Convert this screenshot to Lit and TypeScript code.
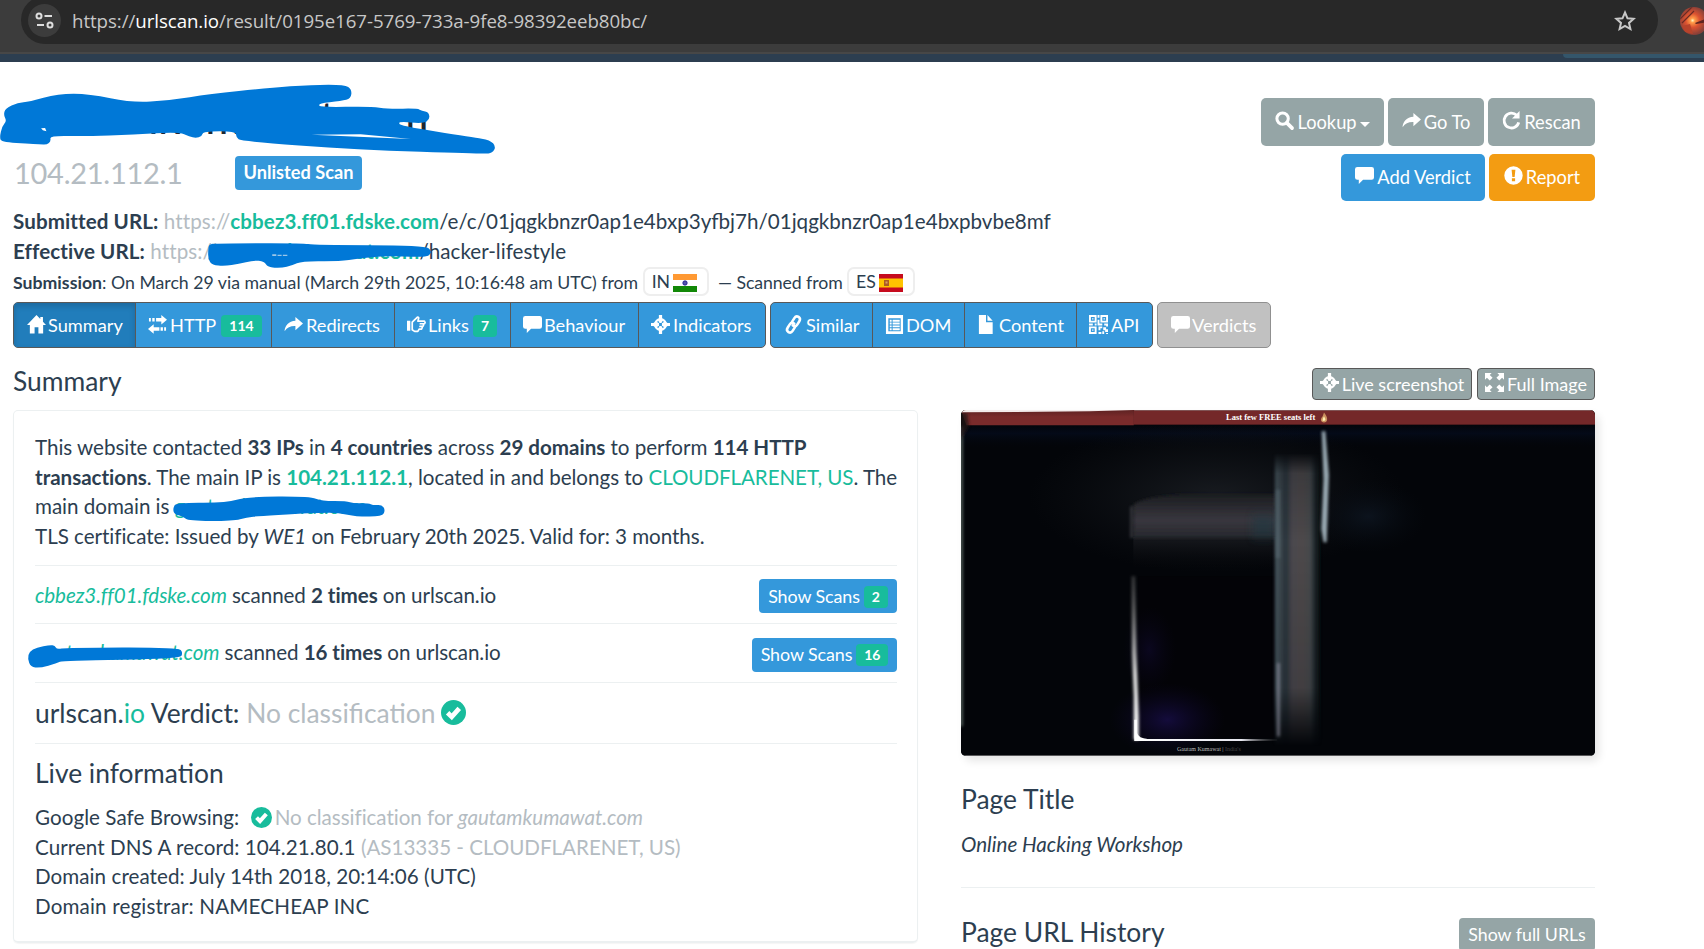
import { LitElement, html, svg, css } from "lit";
import { customElement } from "lit/decorators.js";

type Pt = [number, number];

/* Closed marker outline, smoothed through the midpoints of its vertices. */
const blob = (pts: Pt[]): string => {
  const mid = (a: Pt, b: Pt) => `${(a[0] + b[0]) / 2} ${(a[1] + b[1]) / 2}`;
  const n = pts.length;
  let d = `M${mid(pts[n - 1], pts[0])}`;
  pts.forEach((p, i) => (d += `Q${p[0]} ${p[1]} ${mid(p, pts[(i + 1) % n])}`));
  return d + "Z";
};

const TITLE: Pt[] = [[8,345],[12,325],[40,308],[65,305],[130,281],[200,281],[295,308],[380,301],[470,282],[600,264],[700,254],[772,254],[788,268],[786,296],[765,303],[712,311],[718,322],[830,319],[870,327],[935,325],[945,333],[960,336],[963,358],[948,371],[893,364],[893,377],[1060,412],[1098,420],[1111,440],[1103,459],[1085,462],[800,449],[540,424],[529,412],[528,394],[455,394],[452,410],[438,414],[425,410],[400,396],[300,404],[190,409],[112,407],[114,424],[105,434],[90,433],[4,427],[-1,412],[5,378],[15,363]];
const EFFECTIVE: Pt[] = [[510,150],[512,133],[530,130],[740,129],[770,135],[1040,136],[1058,152],[1052,168],[1030,171],[940,168],[880,176],[830,184],[740,183],[715,197],[690,204],[655,202],[648,184],[620,181],[585,192],[550,198],[520,195],[510,178]];
const DOMAIN: Pt[] = [[519,325],[528,308],[680,309],[740,290],[930,289],[965,303],[1040,303],[1060,310],[1105,309],[1120,316],[1145,314],[1156,330],[1147,349],[1070,350],[1015,338],[960,338],[890,342],[780,348],[740,352],[700,363],[565,363],[550,350],[522,342]];
const SCANNED: Pt[] = [[83,775],[88,755],[110,742],[150,735],[165,737],[170,748],[200,743],[535,742],[549,758],[540,777],[190,781],[170,790],[120,804],[92,801]];

const ICONS: Record<string, unknown> = {
  search: svg`<circle cx="8" cy="8" r="6" fill="none" stroke="currentColor" stroke-width="3.200"/><path d="M12.500 12.500l5.500 5.500" stroke="currentColor" stroke-width="3.800" stroke-linecap="round"/>`,
  share: svg`<path d="M12 2l8 7-8 7v-4.300C7 11.500 3.500 13 0.600 17 1 11 5 6.200 12 6z"/>`,
  repeat: svg`<path d="M15.500 4.500A7.800 7.800 0 1 0 17.600 12" fill="none" stroke="currentColor" stroke-width="3"/><path d="M18.500 0v8h-8z"/>`,
  comment: svg`<path d="M2.500 1h15q2.500 0 2.500 2.500v8.500q0 2.500-2.500 2.500H8.500L4 19v-4.500H2.500Q0 14.500 0 12V3.500Q0 1 2.500 1z"/>`,
  alert: svg`<path fill-rule="evenodd" d="M10 .3a9.700 9.700 0 1 0 0 19.400A9.700 9.700 0 1 0 10 .3zM8 4h4l-.8 7.500H8.800zM8.300 13h3.400v3H8.300z"/>`,
  home: svg`<path d="M10 0L0 10.500h3V19.500h5V13h4v6.500h5v-9h3L16.800 7.100V2H14v2.200z"/>`,
  transfer: svg`<path d="M14 0l6 5-6 5V6.800H8.500V3.200H14zM1 3.200h2v3.600H1zM4.500 3.200h2.500v3.600H4.500zM6 9.700l-6 5 6 5v-3.200h6v-3.600H6zM13.200 12.900h2.500v3.600h-2.500zM17 12.900h2v3.600h-2z"/>`,
  hand: svg`<path d="M0 6h3.500v10.500H0z"/><path d="M5.500 7.500L11 2.200q2 0 1 2.300L11.500 6.500h7q1.200 1.500 0 2.700h-4.500 3q1 1.500-.3 2.800h-3 2q.8 1.500-.3 2.800h-2.500l-1.500 2.400H8L5.500 15.500z" fill="none" stroke="currentColor" stroke-width="1.800" stroke-linejoin="round"/>`,
  target: svg`<circle cx="10" cy="10" r="5.700" fill="none" stroke="currentColor" stroke-width="2.300"/><path d="M8.300 0h3.400v4l1 1.500-1.700 3h-2l-1.700-3 1-1.500zM8.300 20h3.400v-4l1-1.500-1.700-3h-2l-1.700 3 1 1.500zM0 8.300v3.400h2.500l3 1.500 3-2v-2.400l-3-2-3 1.500zM20 8.300v3.400h-2.500l-3 1.500-3-2v-2.400l3-2 3 1.500z"/>`,
  link: svg`<g fill="none" stroke="currentColor" stroke-width="2.700" stroke-linecap="round" transform="rotate(32 10 10)"><path d="M7.200 8.500V3.800Q7.200.4 10.300.4T13.400 3.800V8q0 3.200-3.600 3.200"/><path d="M12.800 11.500v4.700q0 3.400-3.100 3.400T6.600 16.200V12q0-3.200 3.600-3.200"/></g>`,
  list: svg`<path fill-rule="evenodd" d="M1 0h18v20H1zM3.500 3.500v13.500h13V3.500z"/><path d="M5 5h2v2H5zM8 5h7.500v2H8zM5 8h2v2H5zM8 8h7.500v2H8zM5 11h2v2H5zM8 11h7.500v2H8zM5 14h2v2H5zM8 14h7.500v2H8z"/>`,
  file: svg`<path d="M2 0h7.500v7.500h7V20H2zM11 0l5.500 6H11z"/>`,
  qr: svg`<path fill-rule="evenodd" d="M0 0h8v8H0zM2 2v4h4V2zM12 0h8v8h-8zM14 2v4h4V2zM0 12h8v8H0zM2 14v4h4v-4zM3.300 3.300h1.400v1.400H3.300zM15.300 3.300h1.400v1.400h-1.400zM3.300 15.300h1.400v1.400H3.300zM9 0h2v3H9zM9 5h2v4h3v2H9zM0 9h4v2H0zM6 9h2v2H6zM16 9h4v3h-2v-1h-2zM10 12h4v2h-2v2h-2zM15 13h3v2h2v3h-3v-2h-2zM10 18h3v2h-3zM14 17h2v3h-2zM18 19h2v1h-2z"/>`,
  full: svg`<path d="M0 0h7L5 2l3 3-3 3-3-3-2 2zM20 0v7l-2-2-3 3-3-3 3-3-2-2zM0 20v-7l2 2 3-3 3 3-3 3 2 2zM20 20h-7l2-2-3-3 3-3 3 3 2-2z"/>`,
  ok: svg`<circle cx="10" cy="10" r="10"/><path d="M5.300 10.200l3.300 3.300 6-6.800" fill="none" stroke="#fff" stroke-width="3.800"/>`,
};
const icon = (name: string, cls = "") =>
  html`<svg class="ic ${cls}" viewBox="0 0 20 20" fill="currentColor" overflow="visible">${ICONS[name]}</svg>`;

interface Tab { icon: string; label: string; w: number; gap: number; count?: number; active?: boolean }
const GROUPS: Tab[][] = [
  [
    { icon: "home", label: "Summary", w: 121, active: true, gap: 2 },
    { icon: "transfer", label: "HTTP", w: 136, count: 114, gap: 3 },
    { icon: "share", label: "Redirects", w: 123, gap: 3 },
    { icon: "hand", label: "Links", w: 116, count: 7, gap: 2 },
    { icon: "comment", label: "Behaviour", w: 128, gap: 2 },
    { icon: "target", label: "Indicators", w: 127, gap: 3 },
  ],
  [
    { icon: "link", label: "Similar", w: 101, gap: 3 },
    { icon: "list", label: "DOM", w: 92, gap: 2 },
    { icon: "file", label: "Content", w: 112, gap: 3 },
    { icon: "qr", label: "API", w: 76, gap: 3 },
  ],
];

@customElement("app-root")
export class AppRoot extends LitElement {
  static styles = css`
    :host { display: block; position: relative; width: 1704px; height: 949px; overflow: hidden; background: #fff;
      font-family: Lato, sans-serif; font-size: 20.6px; line-height: 29.7px; color: #2c3e50; }
    * { box-sizing: border-box; }
    b { font-weight: 700; }
    .green { color: #18bc9c; }
    .mute { color: #b4bcc2; }
    .chrome { height: 52px; background: #3c3c3c; display: flex; padding-left: 21px; overflow: hidden; }
    .omni { flex: none; margin-top: -4px; width: 1637px; height: 48px; border-radius: 24px; background: #282828; display: flex; align-items: center; padding: 1px 22px 0 7px; }
    .tune { width: 33px; height: 33px; border-radius: 50%; background: #3c3c3c; display: grid; place-items: center; }
    .addr { flex: 1; margin-left: 11px; font: 18.700px/24px "Open Sans", sans-serif; letter-spacing: -.06px; color: #c7c7c7; white-space: pre; }
    .addr span { color: #fff; }
    .avatar { margin: 7px 0 0 22px; flex: none; }
    .edge { height: 2px; background: #474747; }
    .nav { height: 8px; background: #2c3e50; display: flex; justify-content: flex-end; }
    .nav i { width: 141px; height: 4px; background: #34566b; border-bottom-left-radius: 4px; }
    .page { padding-left: 13px; width: 1595px; }
    .head { display: flex; height: 240px; justify-content: space-between; }
    .title { margin: 0; height: 94px; padding: 35px 0 0 1px; font-size: 44.300px; line-height: 40px; font-weight: 400; color: #1d2731; }
    .iprow { display: flex; align-items: center; height: 34px; margin-bottom: 16px; }
    .ip { width: 222px; font-size: 29px; letter-spacing: -.27px; padding-left: 1px; color: #b4bcc2; }
    .badge { background: #3498db; color: #fff; font-weight: 700; font-size: 18.200px; border-radius: 4px; width: 127px; height: 34px; line-height: 33px; text-align: center; }
    .url { height: 30px; line-height: 30px; white-space: pre; }
    .url b { letter-spacing: .08px; } .url .mute { letter-spacing: .1px; } .url .wide { letter-spacing: .36px; }
    .sub { display: flex; align-items: center; height: 31px; padding-top: 2px; font-size: 17.700px; white-space: pre; }
    .sub .from { letter-spacing: -.08px; }
    .flag { display: inline-flex; align-items: center; height: 29px; margin-top: -2px; border: 2px solid #eee; border-radius: 7px; padding: 0 10px 0 7px; gap: 3px; }
    .flag svg { margin-top: 2px; }
    .tools { padding-top: 36px; display: flex; flex-direction: column; gap: 8px; align-items: flex-end; }
    .row { display: flex; gap: 4px; }
    .btn { display: flex; align-items: center; justify-content: center; color: #fff; background: #95a5a6; height: 48px; border-radius: 5px; padding-top: 2px; font-size: 18.300px; white-space: pre; }
    .btn .ic { margin: -5px 3px 0 0; }
    .blue { background: #3498db; } .orange { background: #f39c12; }
    .second .btn { height: 47px; padding-top: 1px; }
    .b-look { width: 123px; } .b-go { width: 96px; } .b-re { width: 107px; } .b-add { width: 144px; } .b-rep { width: 106px; }
    .caret { border: 5px solid transparent; border-top-color: #fff; border-bottom: 0; margin: 3px 0 0 3px; }
    .ic { width: 19px; height: 19px; flex: none; }
    .tabs { display: flex; height: 46px; gap: 4px; }
    .group { display: flex; border: 1px solid #585858; border-radius: 5px; overflow: hidden; background: #3498db; }
    .tab { display: flex; align-items: center; color: #fff; font-size: 18.200px; white-space: pre; padding: 2px 0 0 12px; border-left: 1px solid #585858; }
    .tab:first-child { border-left: 0; padding-left: 13px; }
    .tab .ic { margin-top: -4px; }
    .tab.on { background: #217dbb; box-shadow: inset 0 3px 6px rgba(0,0,0,.16); }
    .off { background: #c1c1c1; border-color: #909090; width: 114px; }
    .off .tab { gap: 2px; }
    .count { background: #18bc9c; font-weight: 700; font-size: 14px; line-height: 22px; height: 22px; border-radius: 4px; padding: 0 8px; margin-left: 4px; }
    .tab .count { margin-left: 2px; margin-top: -1px; }
    .cols { display: flex; justify-content: space-between; }
    .left { width: 905px; } .right { width: 634px; }
    h2 { margin: 0; font-weight: 400; font-size: 26.400px; line-height: 36px; }
    .h-sum { height: 62px; padding-top: 15px; }
    .panel { height: 533px; border: 1px solid #ecf0f1; border-bottom-width: 2px; border-radius: 5px; padding: 22px 20px 0 21px; box-shadow: 0 1px 1px rgba(0,0,0,.04); }
    .para { height: 133px; border-bottom: 1px solid #ecf0f1; white-space: nowrap; letter-spacing: -.03px; }
    .para .net { letter-spacing: -.09px; }
    .scan { display: flex; align-items: center; justify-content: space-between; border-bottom: 1px solid #ecf0f1; height: 58px; letter-spacing: -.075px; padding-top: 3px; }
    .scan.two { height: 59px; }
    .scan > div:first-child { margin-top: -1px; }
    .scan.two > div:first-child { margin-top: -3px; }
    .show { height: 34px; width: 138px; font-size: 17.900px; border-radius: 4px; padding-top: 1px; letter-spacing: -.1px; }
    .show.w { width: 145px; }
    .verdict { height: 61px; border-bottom: 1px solid #ecf0f1; display: flex; align-items: center; font-size: 26.400px; white-space: pre; padding-top: 1px; }
    .big { width: 25px; height: 25px; margin: -3px 0 0 6px; color: #18bc9c; }
    .live { padding: 11px 0 11px; height: 59px; }
    .rec { letter-spacing: .06px; } .rec .mute { letter-spacing: -.03px; } .rec.caps { letter-spacing: .16px; }
    .small { width: 21px; height: 21px; color: #18bc9c; vertical-align: -3px; margin: 0 3px 0 6px; }
    .shotbar { height: 62px; padding-top: 20px; display: flex; justify-content: flex-end; gap: 5px; }
    .sm { height: 32px; border: 1px solid #585858; border-radius: 4px; font-size: 18px; width: 160px; padding-top: 1px; }
    .sm.f { width: 118px; } .sm .ic { margin: -4px 3px 0 0; }
    .shot { position: relative; height: 346px; border-radius: 5px; overflow: hidden; background: #030509; }
    .shotwrap { border-radius: 6px; box-shadow: 4px 5px 8px rgba(0,0,0,.1); }
    .shot > svg { display: block; width: 634px; height: 346px; }
    .promo { position: absolute; top: 2px; left: 265px; font: bold 8.500px/11px "Liberation Serif", serif; color: #fff; display: flex; gap: 5px; }
    .foot { position: absolute; top: 335px; left: 216px; font: 6px/8px "Liberation Serif", serif; color: #bbb; }
    .foot span { color: #444; }
    .pt { padding-top: 25px; height: 73px; }
    .ptv { height: 59px; padding-top: 1px; border-bottom: 1px solid #ecf0f1; font-style: italic; }
    .hist { display: flex; justify-content: space-between; padding-top: 26px; }
    .hist .btn { width: 136px; height: 33px; margin-top: 4px; padding-top: 1px; font-size: 17.800px; border-radius: 4px; }
    .mark { position: absolute; left: 0; top: 0; pointer-events: none; }
  `;

  render() {
    return html`
      <div class="chrome">
        <div class="omni">
          <div class="tune"><svg width="19" height="18" viewBox="0 0 19 18" fill="none" stroke="#dedede" stroke-width="2"><circle cx="4" cy="4" r="2.500"/><path d="M9.500 4H17M2 13h7"/><circle cx="15" cy="13" r="2.500"/></svg></div>
          <div class="addr">https://<span>urlscan.io</span>/result/0195e167-5769-733a-9fe8-98392eeb80bc/</div>
          <svg width="22" height="22" viewBox="0 0 22 22" fill="none" stroke="#c7c7c7" stroke-width="2"><path d="M11 2.500l2.500 5.800 6.200.5-4.700 4.100 1.400 6.100L11 15.800 5.600 19 7 12.900 2.300 8.800l6.200-.5z"/></svg>
        </div>
        <svg class="avatar" width="28" height="28" viewBox="0 0 28 28"><defs><clipPath id="av"><circle cx="14" cy="14" r="14"/></clipPath><radialGradient id="ag" cx=".45" cy=".48"><stop offset="0" stop-color="#fff6c0"/><stop offset=".16" stop-color="#ff9c48"/><stop offset=".5" stop-color="#dc5230"/><stop offset="1" stop-color="#8a4038"/></radialGradient></defs>
          <g clip-path="url(#av)"><rect width="28" height="28" fill="url(#ag)"/><path d="M0 12L12 0M2 16L14 4" stroke="#6a2a24" stroke-width="1.200"/><path d="M15 16l13-5v4l-12 2z" fill="#5e2420"/><path d="M2 19l8-2 3 10-8-2z" fill="#b8432b"/></g></svg>
      </div>
      <div class="edge"></div>
      <div class="nav"><i></i></div>

      <div class="page">
        <div class="head">
          <div>
            <h1 class="title">gautamkumawat.com</h1>
            <div class="iprow"><div class="ip">104.21.112.1</div><div class="badge">Unlisted Scan</div></div>
            <div class="url"><b>Submitted URL:</b> <span class="mute">https://</span><b class="green">cbbez3.ff01.fdske.com</b>/e/c/01jqgkbnzr0ap1e4bxp3yfbj7h/01jqgkbnzr0ap1e4bxpbvbe8mf</div>
            <div class="url"><b>Effective URL:</b> <span class="mute">https://</span><b class="green wide">gautamkumawat.com</b>/hacker-lifestyle</div>
            <div class="sub"><b>Submission</b>: On March 29 via manual (March 29th 2025, 10:16:48 am UTC) from <span class="flag">IN<svg width="24" height="18" viewBox="0 0 24 18"><path fill="#f93" d="M0 0h24v6H0z"/><path fill="#fff" d="M0 6h24v6H0z"/><path fill="#128807" d="M0 12h24v6H0z"/><circle cx="12" cy="9" r="2.200" fill="#55a" stroke="#118" stroke-width=".8"/></svg></span><span class="from">  — Scanned from </span><span class="flag">ES<svg width="24" height="18" viewBox="0 0 24 18"><path fill="#c60b1e" d="M0 0h24v18H0z"/><path fill="#ffc400" d="M0 4.500h24v9H0z"/><path fill="#ad5b22" d="M5 6h5v6H5z"/><path fill="#d9a066" d="M6.500 7.500h2v2h-2z"/></svg></span></div>
          </div>
          <div class="tools">
            <div class="row"><div class="btn b-look">${icon("search")}Lookup<span class="caret"></span></div><div class="btn b-go">${icon("share")}Go To</div><div class="btn b-re">${icon("repeat")}Rescan</div></div>
            <div class="row second"><div class="btn blue b-add">${icon("comment")}Add Verdict</div><div class="btn orange b-rep">${icon("alert")}Report</div></div>
          </div>
        </div>

        <div class="tabs">
          ${GROUPS.map((g) => html`<div class="group">${g.map((t) => html`<div class="tab ${t.active ? "on" : ""}" style="width:${t.w}px;gap:${t.gap}px">${icon(t.icon)}${t.label}${t.count ? html`<span class="count">${t.count}</span>` : ""}</div>`)}</div>`)}
          <div class="group off"><div class="tab">${icon("comment")}Verdicts</div></div>
        </div>

        <div class="cols">
          <div class="left">
            <h2 class="h-sum">Summary</h2>
            <div class="panel">
              <div class="para">This website contacted <b>33 IPs</b> in <b>4 countries</b> across <b>29 domains</b> to perform <b>114 HTTP</b><br><b>transactions</b>. The main IP is <b class="green">104.21.112.1</b>, located in and belongs to <span class="green net">CLOUDFLARENET, US</span>. The<br>main domain is <span class="green">gautamkumawat.com</span><br>TLS certificate: Issued by <i>WE1</i> on February 20th 2025. Valid for: 3 months.</div>
              <div class="scan"><div><i class="green">cbbez3.ff01.fdske.com</i> scanned <b>2 times</b> on urlscan.io</div><div class="btn blue show">Show Scans<span class="count">2</span></div></div>
              <div class="scan two"><div><i class="green">gautamkumawat.com</i> scanned <b>16 times</b> on urlscan.io</div><div class="btn blue show w">Show Scans<span class="count">16</span></div></div>
              <div class="verdict">urlscan.<span class="green">io</span> Verdict: <span class="mute">No classification</span>${icon("ok", "big")}</div>
              <h2 class="live">Live information</h2>
              <div class="rec">Google Safe Browsing: ${icon("ok", "small")}<span class="mute">No classification for <i>gautamkumawat.com</i></span></div>
              <div class="rec">Current DNS A record: 104.21.80.1 <span class="mute">(AS13335 - CLOUDFLARENET, US)</span></div>
              <div class="rec">Domain created: July 14th 2018, 20:14:06 (UTC)</div>
              <div class="rec caps">Domain registrar: NAMECHEAP INC</div>
            </div>
          </div>
          <div class="right">
            <div class="shotbar"><div class="btn sm">${icon("target")}Live screenshot</div><div class="btn sm f">${icon("full")}Full Image</div></div>
            <div class="shotwrap"><div class="shot">
              <svg viewBox="48 181 1420 1038" preserveAspectRatio="none">
                <defs>
                  <filter id="b3" x="-100%" width="300%"><feGaussianBlur stdDeviation="3 4"/></filter>
                  <filter id="b10" x="-50%" y="-50%" width="200%" height="200%"><feGaussianBlur stdDeviation="8 18"/></filter>
                  <linearGradient id="band" x2="0" y2="1"><stop offset="0" stop-color="#1b1c20"/><stop offset=".3" stop-color="#2a2a2f"/><stop offset=".6" stop-color="#38363e"/><stop offset="1" stop-color="#26282d"/></linearGradient>
                  <linearGradient id="under" x2="0" y2="1"><stop offset="0" stop-color="#17191e"/><stop offset="1" stop-color="#07080b" stop-opacity="0"/></linearGradient>
                  <linearGradient id="pillar"><stop offset="0" stop-color="#4a5a63"/><stop offset=".14" stop-color="#39434b"/><stop offset=".25" stop-color="#28323a"/><stop offset=".38" stop-color="#4b484e"/><stop offset=".62" stop-color="#4e484b"/><stop offset=".8" stop-color="#45494d"/><stop offset=".88" stop-color="#1d262b"/><stop offset="1" stop-color="#0c1216"/></linearGradient>
                  <linearGradient id="down" x2="0" y2="1"><stop offset="0" stop-color="#fff" stop-opacity="0"/><stop offset=".07" stop-color="#fff" stop-opacity=".75"/><stop offset=".3" stop-color="#fff"/><stop offset=".8" stop-color="#fff" stop-opacity=".85"/><stop offset="1" stop-color="#fff" stop-opacity="0"/></linearGradient>
                  <mask id="pm"><rect x="740" y="310" width="125" height="880" fill="url(#down)"/></mask>
                  <linearGradient id="sky" x2="0" y2="1"><stop offset="0" stop-color="#03050a"/><stop offset=".35" stop-color="#040a18"/><stop offset="1" stop-color="#030509" stop-opacity="0"/></linearGradient>
                  <radialGradient id="haze"><stop offset="0" stop-color="#181b20"/><stop offset="1" stop-color="#101317" stop-opacity="0"/></radialGradient>
                  <radialGradient id="violet"><stop offset="0" stop-color="#140c3c"/><stop offset="1" stop-color="#0a0620" stop-opacity="0"/></radialGradient>
                  <radialGradient id="navy"><stop offset="0" stop-color="#0c131d"/><stop offset="1" stop-color="#060a10" stop-opacity="0"/></radialGradient>
                  <linearGradient id="fade" x2="0" y2="1"><stop offset="0" stop-color="#777" stop-opacity=".4"/><stop offset=".6" stop-color="#ddd"/><stop offset="1" stop-color="#fff"/></linearGradient>
                  <linearGradient id="ft"><stop offset="0" stop-color="#fff"/><stop offset=".75" stop-color="#e8e8f0"/><stop offset="1" stop-color="#555" stop-opacity=".1"/></linearGradient>
                  <linearGradient id="redl" x2="0" y2="1"><stop offset="0" stop-color="#5e2222"/><stop offset=".45" stop-color="#7a2b2b"/><stop offset="1" stop-color="#7a2b2b"/></linearGradient>
                </defs>
                <rect x="48" y="181" width="1420" height="1038" fill="#030509"/>
                <rect x="48" y="225" width="1420" height="75" fill="url(#sky)"/>
                <ellipse cx="620" cy="440" rx="420" ry="230" fill="url(#haze)"/>
                <ellipse cx="960" cy="500" rx="130" ry="110" fill="url(#navy)"/>
                <rect x="434" y="562" width="322" height="95" fill="url(#under)"/>
                <path d="M434 466q20-24 110-32h208v130H434z" fill="url(#band)" filter="url(#b3)"/>
                <rect x="445" y="680" width="305" height="485" fill="#030307"/>
                <ellipse cx="510" cy="1110" rx="130" ry="110" fill="url(#violet)"/>
                <ellipse cx="470" cy="900" rx="60" ry="130" fill="url(#violet)" opacity=".45"/>
                <rect x="700" y="500" width="50" height="60" fill="#1d3a44" opacity=".55" filter="url(#b10)"/>
                <g mask="url(#pm)"><rect x="751" y="300" width="100" height="900" fill="url(#pillar)" filter="url(#b3)"/></g>
                <rect x="753" y="420" width="10" height="205" fill="#5f6f78" opacity=".45" filter="url(#b3)"/>
                <rect x="756" y="940" width="6" height="220" fill="#9796a8" opacity=".65" filter="url(#b3)"/>
                <path d="M856 245h8l8 130-5 203h-7l-5-40 5-150z" fill="#a9bbc5" filter="url(#b3)" opacity=".9"/>
                <path d="M430 680h8l3 230 5 190v70h-11V1040l-4-130z" fill="url(#fade)" filter="url(#b3)"/>
                <path d="M436 1110h6v40q4 16 24 18h290v6H436z" fill="url(#ft)"/>
                <rect x="427" y="470" width="5" height="95" fill="#85838c" opacity=".4" filter="url(#b3)"/>
                <rect x="46" y="230" width="6" height="900" fill="#93a89c" opacity=".6" filter="url(#b3)"/>
                <rect x="434" y="181" width="1034" height="44" fill="#742829"/>
                <path d="M48 181h387v46H60z" fill="url(#redl)"/>
                <path d="M46 190h16l4 40-18 40z" fill="#241214" opacity=".8" filter="url(#b3)"/>
                <path d="M48 181h388l-100 4-288 3z" fill="#f3ecec"/>
                <path d="M436 181.500h1032" stroke="#8d8080" stroke-width="2"/>
                <path d="M48 1218h1420" stroke="#888" stroke-width="2"/>
              </svg>
              <div class="promo">Last few FREE seats left <svg width="8" height="11" viewBox="0 0 9 11"><path d="M4.500 0Q8.500 5 8 8q-.5 3-3.500 3T1 8q0-2 2-4z" fill="#c98f5e"/><path d="M4.500 4q2 3 1.500 5l-3 .5Q2.500 7 4.500 4z" fill="#fff0b0"/></svg></div>
              <div class="foot">Gautam Kumawat | <span>India's</span></div>
            </div></div>
            <h2 class="pt">Page Title</h2>
            <div class="ptv">Online Hacking Workshop</div>
            <div class="hist"><h2>Page URL History</h2><div class="btn">Show full URLs</div></div>
          </div>
        </div>
      </div>

      <svg class="mark" width="1704" height="949" viewBox="0 0 1704 949" fill="#0078d7">
        <g transform="scale(.446429 .333333)"><path d="${blob(TITLE)}"/><path d="M92 385l9-1 3 10-8-3zM698 404l110-1 112 14z" fill="#fff"/></g>
        <g transform="translate(0 200) scale(.408163 .333333)"><path d="${blob(EFFECTIVE)}"/><path d="M667 163h10v5h-10zM680 164h10v4h-10zM693 164h11v4h-11z" fill="#9bc6e8"/></g>
        <g transform="translate(0 400) scale(.333333)"><path d="${blob(DOMAIN)}"/><path d="${blob(SCANNED)}"/></g>
      </svg>
    `;
  }
}
